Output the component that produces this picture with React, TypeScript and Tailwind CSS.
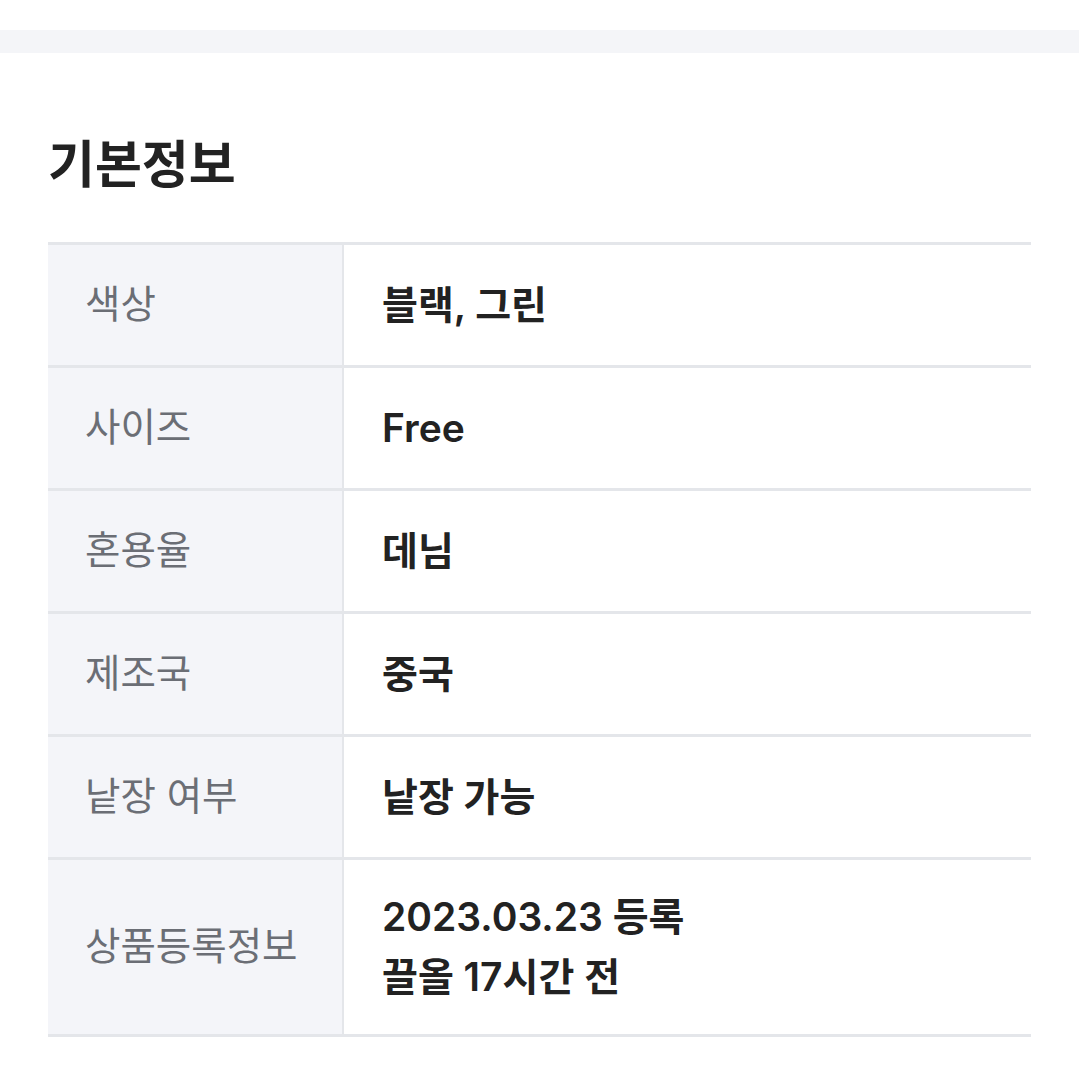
import React from "react";

const rows: { label: string; value: React.ReactNode; tall?: boolean }[] = [
  { label: "색상", value: "블랙, 그린" },
  { label: "사이즈", value: "Free" },
  { label: "혼용율", value: "데님" },
  { label: "제조국", value: "중국" },
  { label: "낱장 여부", value: "낱장 가능" },
  {
    label: "상품등록정보",
    value: (
      <>
        <div>2023.03.23 등록</div>
        <div>끌올 17시간 전</div>
      </>
    ),
    tall: true,
  },
];

export default function App() {
  return (
    <div
      className="w-[1079px] h-[1079px] bg-white overflow-hidden"
      style={{ fontFamily: 'Inter, "Noto Sans CJK KR", "Noto Sans", sans-serif' }}
    >
      <div className="h-[30px] bg-white" />
      <div className="h-[23px] bg-[#f4f5f8]" />
      <div className="px-[48px]">
        <h2 className="mt-[80px] text-[51px] leading-[64px] font-bold text-[#222222]">
          기본정보
        </h2>
        <div className="mt-[45px] w-[983px] border-t-[3px] border-[#e4e6ea]">
          {rows.map((r) => (
            <div
              key={r.label}
              className={`flex border-b-[3px] border-[#e4e6ea] ${r.tall ? "h-[177px]" : "h-[123px]"}`}
            >
              <div className="w-[296px] shrink-0 bg-[#f4f5f9] border-r-[2px] border-[#e4e6ea] flex items-center pl-[37px] text-[38.5px] text-[#6b6e75]">
                {r.label}
              </div>
              <div className="flex-1 flex flex-col justify-center pl-[38px] text-[39px] leading-[60px] font-semibold text-[#222222]">
                {r.value}
              </div>
            </div>
          ))}
        </div>
      </div>
    </div>
  );
}
